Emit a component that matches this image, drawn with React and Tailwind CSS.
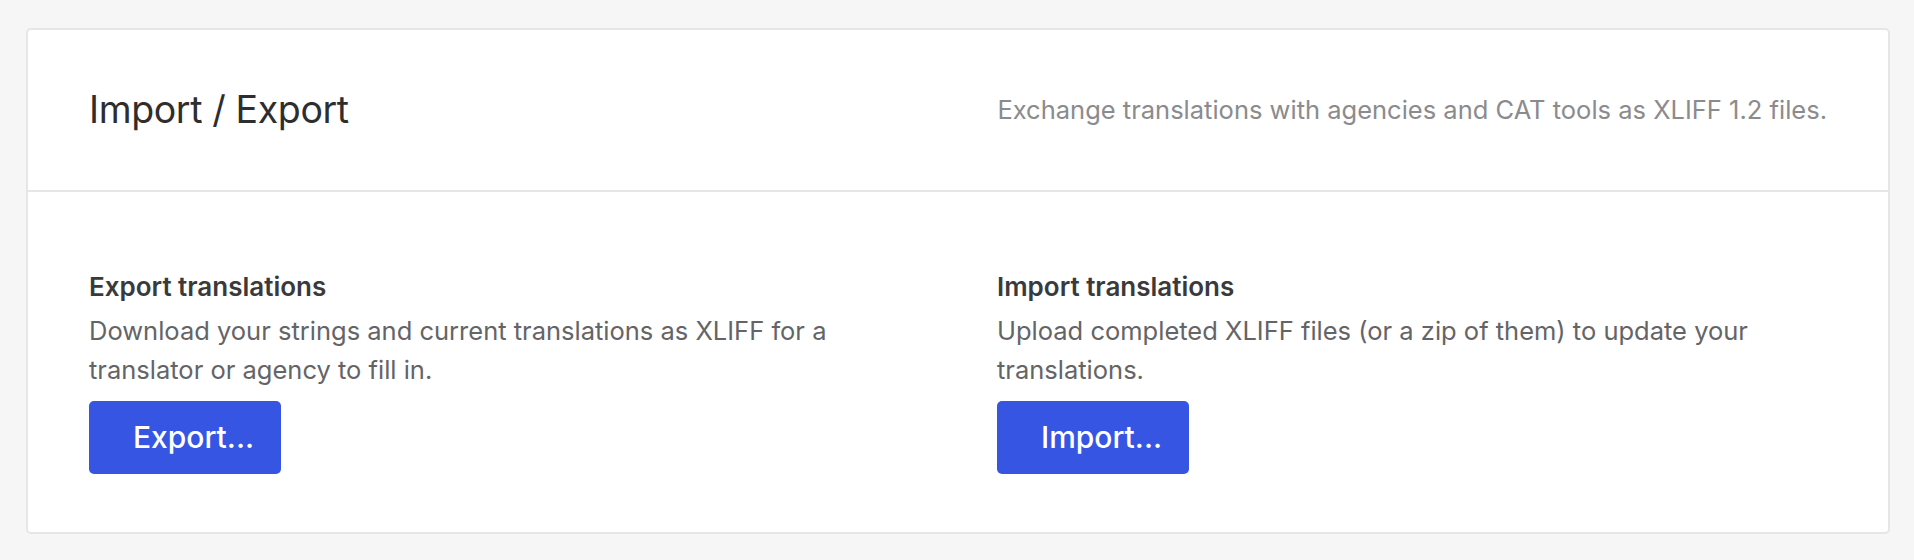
import React from "react";

const sections = [
  {
    title: "Export translations",
    text: "Download your strings and current translations as XLIFF for a translator or agency to fill in.",
    button: "Export...",
  },
  {
    title: "Import translations",
    text: "Upload completed XLIFF files (or a zip of them) to update your translations.",
    button: "Import...",
  },
];

const App = () => {
  return (
    <div
      className="min-h-screen bg-[#f5f6f5] pt-[28px] pb-[26px] pl-[26px] pr-[24px]"
      style={{ fontFamily: "Inter, 'Noto Sans', sans-serif" }}
    >
      <div className="bg-white border-2 border-[#e4e6e7] rounded-[5px]">
        {/* header */}
        <div className="h-[162px] flex items-center justify-between px-[61px] border-b-2 border-[#e4e6e7]">
          <h1 className="text-[37.5px] text-[#2e2e30] tracking-[-0.01em]">Import / Export</h1>
          <p className="text-[25.5px] text-[#8b8b8e]">
            Exchange translations with agencies and CAT tools as XLIFF 1.2 files.
          </p>
        </div>

        {/* body */}
        <div className="grid grid-cols-2 gap-x-[78px] px-[61px] pt-[78px] pb-[58px]">
          {sections.map((s, index) => (
            <div key={index}>
              <h2 className="text-[26px] leading-[34px] font-semibold text-[#3a3a3c]">{s.title}</h2>
              <p className="mt-[7px] text-[25.5px] leading-[39px] text-[#646467]">{s.text}</p>
              <button className="mt-[12px] h-[73px] pl-[44px] pr-[27px] rounded-[5px] bg-[#3655e2] text-white text-[30px] font-medium">
                {s.button}
              </button>
            </div>
          ))}
        </div>
      </div>
    </div>
  );
};

export default App;
